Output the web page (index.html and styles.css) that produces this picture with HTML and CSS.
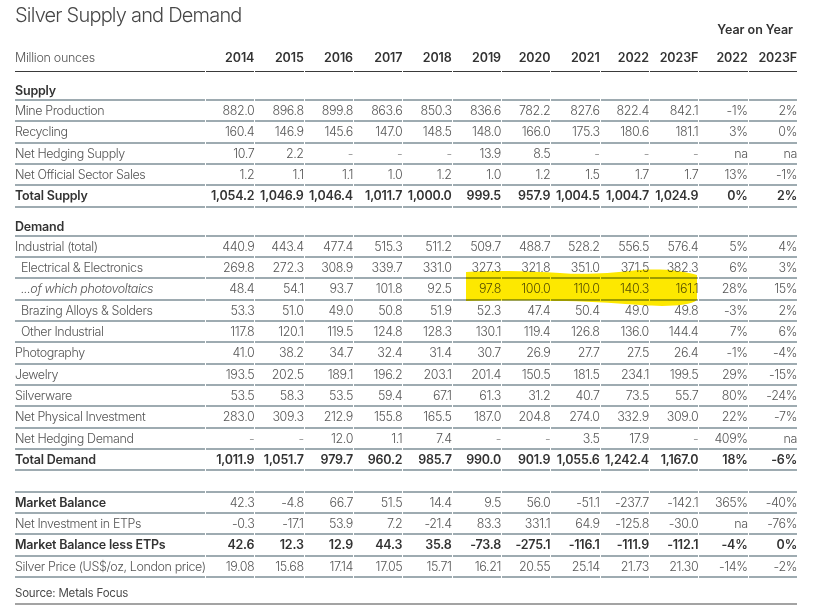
FILE: index.html
```html
<!DOCTYPE html>
<html lang="en">
<head>
<meta charset="utf-8">
<title>Silver Supply and Demand</title>
<link rel="stylesheet" href="styles.css">
</head>
<body>
<div class="page">
  <div class="top">
    <h1 class="title">Silver Supply and Demand</h1>
    <div class="yoy">Year on Year</div>
  </div>
  <table class="sd">
    <colgroup>
      <col class="c-label">
      <col class="c-num"><col class="c-num"><col class="c-num"><col class="c-num"><col class="c-num"><col class="c-num">
      <col class="c-num"><col class="c-num"><col class="c-num"><col class="c-num"><col class="c-num"><col class="c-num">
    </colgroup>
    <thead>
      <tr class="head">
        <td class="l unit">Million ounces</td>
        <td>2014</td><td>2015</td><td>2016</td><td>2017</td><td>2018</td><td>2019</td><td>2020</td><td>2021</td><td>2022</td><td>2023F</td><td>2022</td><td>2023F</td>
      </tr>
    </thead>
    <tbody>
      <tr class="sec"><td class="l">Supply</td><td></td><td></td><td></td><td></td><td></td><td></td><td></td><td></td><td></td><td></td><td></td><td></td></tr>
      <tr><td class="l">Mine Production</td><td>882.0</td><td>896.8</td><td>899.8</td><td>863.6</td><td>850.3</td><td>836.6</td><td>782.2</td><td>827.6</td><td>822.4</td><td>842.1</td><td>-1%</td><td>2%</td></tr>
      <tr><td class="l">Recycling</td><td>160.4</td><td>146.9</td><td>145.6</td><td>147.0</td><td>148.5</td><td>148.0</td><td>166.0</td><td>175.3</td><td>180.6</td><td>181.1</td><td>3%</td><td>0%</td></tr>
      <tr><td class="l">Net Hedging Supply</td><td>10.7</td><td>2.2</td><td class="d">-</td><td class="d">-</td><td class="d">-</td><td>13.9</td><td>8.5</td><td class="d">-</td><td class="d">-</td><td class="d">-</td><td>na</td><td>na</td></tr>
      <tr><td class="l">Net Official Sector Sales</td><td>1.2</td><td>1.1</td><td>1.1</td><td>1.0</td><td>1.2</td><td>1.0</td><td>1.2</td><td>1.5</td><td>1.7</td><td>1.7</td><td>13%</td><td>-1%</td></tr>
      <tr class="bold"><td class="l">Total Supply</td><td>1,054.2</td><td>1,046.9</td><td>1,046.4</td><td>1,011.7</td><td>1,000.0</td><td>999.5</td><td>957.9</td><td>1,004.5</td><td>1,004.7</td><td>1,024.9</td><td>0%</td><td>2%</td></tr>

      <tr class="sec"><td class="l">Demand</td><td></td><td></td><td></td><td></td><td></td><td></td><td></td><td></td><td></td><td></td><td></td><td></td></tr>
      <tr><td class="l">Industrial (total)</td><td>440.9</td><td>443.4</td><td>477.4</td><td>515.3</td><td>511.2</td><td>509.7</td><td>488.7</td><td>528.2</td><td>556.5</td><td>576.4</td><td>5%</td><td>4%</td></tr>
      <tr><td class="l ind">Electrical &amp; Electronics</td><td>269.8</td><td>272.3</td><td>308.9</td><td>339.7</td><td>331.0</td><td>327.3</td><td>321.8</td><td>351.0</td><td>371.5</td><td>382.3</td><td>6%</td><td>3%</td></tr>
      <tr><td class="l ind it">...of which photovoltaics</td><td>48.4</td><td>54.1</td><td>93.7</td><td>101.8</td><td>92.5</td><td>97.8</td><td>100.0</td><td>110.0</td><td>140.3</td><td>161.1</td><td>28%</td><td>15%</td></tr>
      <tr><td class="l ind">Brazing Alloys &amp; Solders</td><td>53.3</td><td>51.0</td><td>49.0</td><td>50.8</td><td>51.9</td><td>52.3</td><td>47.4</td><td>50.4</td><td>49.0</td><td>49.8</td><td>-3%</td><td>2%</td></tr>
      <tr><td class="l ind">Other Industrial</td><td>117.8</td><td>120.1</td><td>119.5</td><td>124.8</td><td>128.3</td><td>130.1</td><td>119.4</td><td>126.8</td><td>136.0</td><td>144.4</td><td>7%</td><td>6%</td></tr>
      <tr><td class="l">Photography</td><td>41.0</td><td>38.2</td><td>34.7</td><td>32.4</td><td>31.4</td><td>30.7</td><td>26.9</td><td>27.7</td><td>27.5</td><td>26.4</td><td>-1%</td><td>-4%</td></tr>
      <tr><td class="l">Jewelry</td><td>193.5</td><td>202.5</td><td>189.1</td><td>196.2</td><td>203.1</td><td>201.4</td><td>150.5</td><td>181.5</td><td>234.1</td><td>199.5</td><td>29%</td><td>-15%</td></tr>
      <tr><td class="l">Silverware</td><td>53.5</td><td>58.3</td><td>53.5</td><td>59.4</td><td>67.1</td><td>61.3</td><td>31.2</td><td>40.7</td><td>73.5</td><td>55.7</td><td>80%</td><td>-24%</td></tr>
      <tr><td class="l">Net Physical Investment</td><td>283.0</td><td>309.3</td><td>212.9</td><td>155.8</td><td>165.5</td><td>187.0</td><td>204.8</td><td>274.0</td><td>332.9</td><td>309.0</td><td>22%</td><td>-7%</td></tr>
      <tr><td class="l">Net Hedging Demand</td><td class="d">-</td><td class="d">-</td><td>12.0</td><td>1.1</td><td>7.4</td><td class="d">-</td><td class="d">-</td><td>3.5</td><td>17.9</td><td class="d">-</td><td>409%</td><td>na</td></tr>
      <tr class="bold"><td class="l">Total Demand</td><td>1,011.9</td><td>1,051.7</td><td>979.7</td><td>960.2</td><td>985.7</td><td>990.0</td><td>901.9</td><td>1,055.6</td><td>1,242.4</td><td>1,167.0</td><td>18%</td><td>-6%</td></tr>

      <tr class="spacer"><td class="l"></td><td></td><td></td><td></td><td></td><td></td><td></td><td></td><td></td><td></td><td></td><td></td><td></td></tr>
      <tr><td class="l b">Market Balance</td><td>42.3</td><td>-4.8</td><td>66.7</td><td>51.5</td><td>14.4</td><td>9.5</td><td>56.0</td><td>-51.1</td><td>-237.7</td><td>-142.1</td><td>365%</td><td>-40%</td></tr>
      <tr><td class="l">Net Investment in ETPs</td><td>-0.3</td><td>-17.1</td><td>53.9</td><td>7.2</td><td>-21.4</td><td>83.3</td><td>331.1</td><td>64.9</td><td>-125.8</td><td>-30.0</td><td>na</td><td>-76%</td></tr>
      <tr class="bold"><td class="l">Market Balance less ETPs</td><td>42.6</td><td>12.3</td><td>12.9</td><td>44.3</td><td>35.8</td><td>-73.8</td><td>-275.1</td><td>-116.1</td><td>-111.9</td><td>-112.1</td><td>-4%</td><td>0%</td></tr>
      <tr><td class="l">Silver Price (US$/oz, London price)</td><td>19.08</td><td>15.68</td><td>17.14</td><td>17.05</td><td>15.71</td><td>16.21</td><td>20.55</td><td>25.14</td><td>21.73</td><td>21.30</td><td>-14%</td><td>-2%</td></tr>
      <tr class="source"><td class="l" colspan="13">Source: Metals Focus</td></tr>
    </tbody>
  </table>
  <svg class="marker" width="825" height="613" viewBox="0 0 825 613" aria-hidden="true">
    <path d="M466,272 C500,270 530,271 560,273 C585,275 610,273 630,271 C655,268 680,270 697,275 L697,300 C690,306 665,307 640,305 C610,303 585,301 555,301 C520,300 490,301 466,301 Z" fill="#fde800"/>
  </svg>
</div>
</body>
</html>
```

FILE: styles.css
```css
* { box-sizing: border-box; }

body {
  margin: 0;
  background: #ffffff;
  font-family: Inter, "Noto Sans", "Liberation Sans", sans-serif;
  color: #555555;
}

.page {
  position: relative;
  width: 825px;
  height: 613px;
  padding-left: 15px;
  overflow: hidden;
}

.top {
  display: flex;
  justify-content: space-between;
  width: 783px;
  height: 39px;
  padding-top: 5px;
}

.title {
  margin: 0;
  font-size: 20px;
  line-height: 20px;
  font-weight: 300;
  color: #474747;
  letter-spacing: -0.8px;
}

.yoy {
  align-self: flex-end;
  padding-right: 5px;
  padding-bottom: 1px;
  font-size: 12.5px;
  line-height: 16px;
  font-weight: 600;
  color: #333333;
  letter-spacing: -0.05px;
}

.sd {
  margin-left: -1px;
  width: 784px;
  table-layout: fixed;
  border-collapse: separate;
  border-spacing: 1px 0;
}

.c-label { width: 190px; }
.c-num { width: 48.33px; }

.sd td {
  padding: 0;
  font-size: 12.5px;
  line-height: 19.33px;
  font-weight: 300;
  color: #555555;
  letter-spacing: -0.4px;
  text-align: right;
  white-space: nowrap;
  vertical-align: middle;
  border-bottom: 2px solid #9eabb1;
}

.sd td.l { text-align: left; }
.sd td.ind { padding-left: 6px; }
.sd td.it { font-style: italic; }
.sd td.d { color: #8a8a8a; }
.sd td.b { font-weight: 600; color: #333333; letter-spacing: -0.2px; }

.sd .head td {
  padding-top: 11px;
  padding-bottom: 5px;
  line-height: 16px;
  font-weight: 600;
  color: #333333;
  letter-spacing: -0.1px;
  vertical-align: bottom;
  border-bottom: 1px solid #3a3a3a;
}

.sd .head td.unit {
  font-weight: 300;
  color: #555555;
  letter-spacing: -0.3px;
}

.sd .sec td {
  padding-top: 11px;
  line-height: 16px;
  font-weight: 600;
  color: #333333;
  letter-spacing: -0.2px;
  vertical-align: bottom;
}

.sd .bold td {
  font-weight: 600;
  color: #333333;
  letter-spacing: -0.2px;
}

.sd .spacer td {
  height: 21.5px;
}

.sd .source td {
  padding-top: 7px;
  padding-bottom: 2px;
  line-height: 16px;
  font-size: 11.5px;
  font-weight: 400;
  color: #4a4a4a;
  letter-spacing: -0.2px;
  border-bottom: 2px solid #a3a3a3;
}

.marker {
  position: absolute;
  left: 0;
  top: 0;
  pointer-events: none;
  mix-blend-mode: multiply;
}
```
